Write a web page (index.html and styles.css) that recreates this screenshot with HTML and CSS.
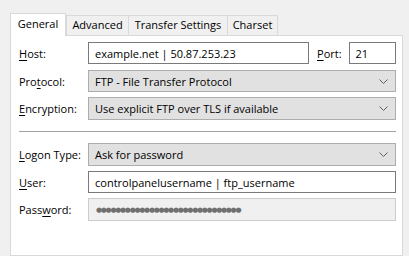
FILE: index.html
```html
<!DOCTYPE html>
<html>
<head>
<meta charset="utf-8">
<link rel="stylesheet" href="styles.css">
</head>
<body>
<div class="dialog">
  <div class="tabs">
    <div class="tab active t-gen">General</div>
    <div class="tab t-adv">Advanced</div>
    <div class="tab t-tra">Transfer Settings</div>
    <div class="tab t-cha">Charset</div>
  </div>
  <div class="panel">
    <div class="row r-host">
      <label class="lbl"><u>H</u>ost:</label>
      <div class="field input host">example.net | 50.87.253.23</div>
      <label class="lbl port-lbl"><u>P</u>ort:</label>
      <div class="field input port">21</div>
    </div>
    <div class="row r-proto">
      <label class="lbl">Pro<u>t</u>ocol:</label>
      <div class="field select"><span>FTP - File Transfer Protocol</span><svg class="chev" width="9" height="5" viewBox="0 0 9 5"><path d="M0.5 0.5 L4.5 4.5 L8.5 0.5" fill="none" stroke="#606060" stroke-width="1"/></svg></div>
    </div>
    <div class="row r-enc">
      <label class="lbl"><u>E</u>ncryption:</label>
      <div class="field select"><span>Use explicit FTP over TLS if available</span><svg class="chev" width="9" height="5" viewBox="0 0 9 5"><path d="M0.5 0.5 L4.5 4.5 L8.5 0.5" fill="none" stroke="#606060" stroke-width="1"/></svg></div>
    </div>
    <div class="sep"></div>
    <div class="row r-logon">
      <label class="lbl"><u>L</u>ogon Type:</label>
      <div class="field select"><span>Ask for password</span><svg class="chev" width="9" height="5" viewBox="0 0 9 5"><path d="M0.5 0.5 L4.5 4.5 L8.5 0.5" fill="none" stroke="#606060" stroke-width="1"/></svg></div>
    </div>
    <div class="row r-user">
      <label class="lbl"><u>U</u>ser:</label>
      <div class="field input">controlpanelusername | ftp_username</div>
    </div>
    <div class="row r-pass">
      <label class="lbl">Pass<u>w</u>ord:</label>
      <div class="field disabled"><span class="dots">●●●●●●●●●●●●●●●●●●●●●●●●●●●●●●</span></div>
    </div>
  </div>
</div>
</body>
</html>
```
FILE: styles.css
```css
html, body {
  margin: 0;
  padding: 0;
  background: #f0f0f0;
  height: 256px;
  overflow: hidden;
}
body {
  font-family: "Segoe UI", "Open Sans", sans-serif;
  font-size: 11px;
  color: #000;
}
.dialog {
  padding: 13px 6px 0 10px;
  display: flex;
  flex-direction: column;
  height: 243px;
}
.tabs {
  display: flex;
  align-items: flex-end;
  height: 22px;
  position: relative;
  z-index: 1;
}
.tab {
  height: 20px;
  box-sizing: border-box;
  border: 1px solid #d9d9d9;
  border-bottom: none;
  background: #f0f0f0;
  margin-left: -1px;
  line-height: 18px;
  white-space: nowrap;
  text-align: center;
}
.tab.active {
  height: 23px;
  margin-left: 0;
  margin-bottom: -1px;
  background: #fff;
  line-height: 20px;
}
.tab.active + .tab { margin-left: 0; }
.t-gen { width: 56px; }
.t-adv { width: 63px; }
.t-tra { width: 100px; }
.t-cha { width: 51px; }
.panel {
  flex: 1;
  background: #fff;
  border: 1px solid #d9d9d9;
  padding: 6px 6px 0 8px;
}
.row {
  display: flex;
  align-items: center;
  height: 22px;
}
.r-proto { margin-top: 6px; }
.r-enc { margin-top: 5px; height: 23px; }
.r-logon { height: 23px; }
.r-user { margin-top: 5px; }
.r-pass { margin-top: 5px; height: 23px; }
.lbl {
  width: 69px;
  flex: none;
}
.field {
  flex: 1;
  height: 100%;
  box-sizing: border-box;
  display: flex;
  align-items: center;
  padding: 0 6px;
  white-space: nowrap;
  overflow: hidden;
}
.input {
  border: 1px solid #7a7a7a;
  background: #fff;
}
.select {
  border: 1px solid #adadad;
  background: #e1e1e1;
  justify-content: space-between;
  padding-right: 7px;
}
.chev { flex: none; }
.disabled {
  border: 1px solid #cccccc;
  background: #f0f0f0;
  padding-left: 7px;
}
.dots {
  font-family: "DejaVu Sans", sans-serif;
  color: #707070;
  font-size: 7px;
  letter-spacing: -1.3px;
}
.host {
  flex: none;
  width: 221px;
}
.port-lbl {
  width: auto;
  margin-left: 8px;
  margin-right: 7px;
}
.port {
  flex: none;
  width: 47px;
}
.sep {
  height: 1px;
  background: #a0a0a0;
  margin: 11px 0 11px 0;
}
u { text-decoration-thickness: 1px; text-underline-offset: 2px; }
```
